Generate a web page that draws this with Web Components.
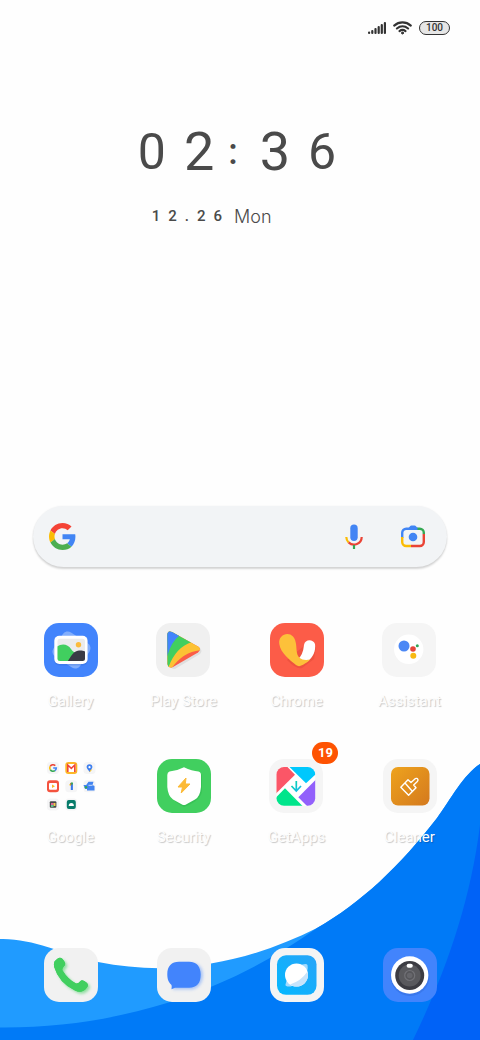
<!DOCTYPE html>
<html lang="en">
<head>
<meta charset="utf-8">
<meta name="viewport" content="width=device-width, initial-scale=1">
<title>Home screen</title>
<style>
  html, body { margin: 0; }
  body {
    font-family: Roboto, "Noto Sans", sans-serif;
    background: #fefefe;
    color: #4a4a4a;
  }
</style>
</head>
<body>

<home-screen>
  <status-bar slot="status" battery="100"></status-bar>
  <home-clock slot="clock" time="02:36" date="12.26" day="Mon"></home-clock>
  <search-pill slot="search"></search-pill>

  <app-icon icon="gallery" tile="#4284fc">Gallery</app-icon>
  <app-icon icon="play" tile="#f0f0f0">Play Store</app-icon>
  <app-icon icon="chrome" tile="#fc5c48">Chrome</app-icon>
  <app-icon icon="assistant" tile="#f5f5f5">Assistant</app-icon>
  <app-icon icon="folder" tile="transparent">Google</app-icon>
  <app-icon icon="security" tile="#41cf5f">Security</app-icon>
  <app-icon icon="getapps" tile="#f5f5f5" badge="19">GetApps</app-icon>
  <app-icon icon="cleaner" tile="#f5f5f5">Cleaner</app-icon>

  <app-icon slot="dock" icon="phone" tile="#f1f1f1" label="Phone"></app-icon>
  <app-icon slot="dock" icon="messages" tile="#f1f1f1" label="Messages"></app-icon>
  <app-icon slot="dock" icon="browser" tile="#f4f4f4" label="Browser"></app-icon>
  <app-icon slot="dock" icon="camera" tile="#4284fc" label="Camera"></app-icon>
</home-screen>

<!-- page frame: wallpaper, top area, app grid, dock -->
<template id="home-screen-tmpl">
  <style>
    :host {
      display: flex;
      flex-direction: column;
      position: relative;
      min-height: 100vh;
      overflow: hidden;
    }
    .wallpaper {
      position: absolute;
      left: 0;
      bottom: 0;
      width: 100%;
      height: 300px;
    }
    header, main, nav { position: relative; }
    main { flex: 1; display: flex; flex-direction: column; }
    .space { flex: 1; }
    .apps, nav {
      display: grid;
      grid-template-columns: repeat(4, 1fr);
      padding: 0 14px;
    }
    .apps { margin-top: 56px; row-gap: 48px; }
    nav { margin-top: 101px; padding-bottom: 38px; }
  </style>
  <svg class="wallpaper" viewBox="0 0 480 300" preserveAspectRatio="none" aria-hidden="true">
    <path fill="#209bff" d="M0 199C32 198 60 213 98 222C135 229 170 231 211 223.500C250 217 285 204 317 188C361 163 400 126 437 78C450 60 464 34 480 24V300H0Z"/>
    <path fill="#007af7" d="M0 287.500C60 288 115 279 167 263C225 244 270 221 317 188C361 163 400 126 437 78C450 60 464 34 480 24V300H0Z"/>
    <path fill="#0062f7" d="M480 85C470 165 444 236 413 300H480Z"/>
  </svg>
  <header>
    <slot name="status"></slot>
    <slot name="clock"></slot>
  </header>
  <main>
    <div class="space"></div>
    <slot name="search"></slot>
    <div class="apps"><slot></slot></div>
  </main>
  <nav aria-label="Dock"><slot name="dock"></slot></nav>
</template>

<template id="status-bar-tmpl">
  <style>
    :host {
      display: flex;
      justify-content: flex-end;
      align-items: center;
      gap: 7px;
      padding: 20px 30px 0 0;
      height: 15px;
    }
    svg { display: block; }
    .battery {
      box-sizing: border-box;
      width: 31px;
      height: 14px;
      border: 1px solid #333;
      border-radius: 7px;
      background: #e6e6e6;
      color: #333;
      font-size: 10px;
      line-height: 12px;
      font-weight: 500;
      text-align: center;
    }
  </style>
  <svg width="18" height="14" viewBox="0 0 18 14" fill="#333" aria-hidden="true">
    <rect x="0" y="10.500" width="2.200" height="2.500" rx="1"/>
    <rect x="3.200" y="9" width="2.200" height="4" rx="1"/>
    <rect x="6.400" y="7" width="2.200" height="6" rx="1"/>
    <rect x="9.600" y="5" width="2.200" height="8" rx="1"/>
    <rect x="12.700" y="3" width="2.200" height="10" rx="1"/>
    <rect x="15.800" y="1" width="2.200" height="12" rx="1"/>
  </svg>
  <svg width="19" height="14" viewBox="0 0 19 14" fill="none" stroke="#333" stroke-width="2.100" stroke-linecap="round" aria-hidden="true">
    <path d="M1.200 4.600C6 .3 13 .3 17.800 4.600M3.900 7.500C7.200 4.700 11.800 4.700 15.100 7.500M6.500 10.100C8.400 8.600 10.600 8.600 12.500 10.100"/>
    <circle cx="9.500" cy="12" r="1" fill="#333" stroke-width="1"/>
  </svg>
  <span class="battery"></span>
</template>

<template id="home-clock-tmpl">
  <style>
    :host {
      display: flex;
      justify-content: center;
      padding: 85px 6px 0 0;
    }
    .time, .group, .date, .digits { display: flex; align-items: center; }
    .time { gap: 14px; height: 64px; font-size: 50px; line-height: 64px; }
    .group { gap: 18px; }
    .big { font-size: 54px; }
    .colon { padding-right: 8px; font-size: 36px; font-weight: 500; }
    .date { gap: 12px; margin-top: 20px; padding-left: 14px; height: 24px; }
    .digits { gap: 8px; font-size: 15px; font-weight: 500; }
    .day { font-family: Inter, sans-serif; font-size: 18px; font-weight: 300; }
  </style>
  <div>
    <div class="time">
      <span class="group hours"></span><span class="colon">:</span><span class="group minutes"></span>
    </div>
    <div class="date"><span class="digits"></span><span class="day"></span></div>
  </div>
</template>

<template id="search-pill-tmpl">
  <style>
    :host { display: block; margin: 0 33px; }
    form {
      display: flex;
      align-items: center;
      gap: 16px;
      height: 61px;
      box-sizing: border-box;
      padding: 0 20px 0 16px;
      border-radius: 31px;
      background: #f2f4f6;
      box-shadow: 0 2px 2px rgba(0, 0, 0, .16), 0 0 2px rgba(0, 0, 0, .06);
    }
    svg { display: block; }
    input {
      flex: 1;
      min-width: 0;
      height: 40px;
      border: 0;
      outline: 0;
      background: none;
      font: 16px Roboto, sans-serif;
      color: #333;
    }
    .tools { display: flex; gap: 31px; }
    button { padding: 0; border: 0; background: none; cursor: pointer; }
  </style>
  <form role="search">
    <svg width="27" height="27" viewBox="0 0 48 48" aria-hidden="true">
      <path fill="#f44336" d="M24 9.500c3.540 0 6.710 1.220 9.210 3.600l6.850-6.850C35.900 2.380 30.470 0 24 0 14.620 0 6.510 5.380 2.560 13.220l7.980 6.190C12.430 13.720 17.740 9.500 24 9.500z"/>
      <path fill="#4285f4" d="M46.980 24.550c0-1.570-.15-3.090-.38-4.550H24v9.020h12.940c-.58 2.960-2.260 5.480-4.780 7.180l7.730 6c4.510-4.180 7.090-10.360 7.090-17.650z"/>
      <path fill="#fbbc05" d="M10.530 28.590c-.48-1.450-.76-2.990-.76-4.590s.27-3.140.76-4.590l-7.980-6.190C.92 16.460 0 20.120 0 24c0 3.880.92 7.540 2.560 10.780l7.970-6.190z"/>
      <path fill="#4caf50" d="M24 48c6.480 0 11.930-2.130 15.890-5.810l-7.730-6c-2.150 1.450-4.920 2.300-8.160 2.300-6.260 0-11.570-4.220-13.470-9.910l-7.980 6.190C6.510 42.620 14.620 48 24 48z"/>
    </svg>
    <input type="text" aria-label="Search">
    <div class="tools">
      <button type="button" aria-label="Voice search">
        <svg width="28" height="28" viewBox="0 0 28 28" fill="none" stroke-width="2.200">
          <rect x="10.300" y="1.500" width="7.400" height="16.500" rx="3.700" fill="#4285f4"/>
          <path stroke="#fbbc05" d="M6.300 14a7.700 7.700 0 0 0 2.300 5.400"/>
          <path stroke="#ea4335" d="M8.600 19.400A7.700 7.700 0 0 0 21.700 14"/>
          <path stroke="#34a853" d="M14 22v4"/>
        </svg>
      </button>
      <button type="button" aria-label="Search with camera">
        <svg width="28" height="28" viewBox="0 0 28 28" fill="none" stroke-width="2.400">
          <path stroke="#4285f4" d="M3.200 15V9.700a4 4 0 0 1 4-4H19"/>
          <path fill="#4285f4" d="M8.500 6.500L11 3.200Q11.500 2.500 12.500 2.500H15.500Q16.500 2.500 17 3.200L19.500 6.500Z"/>
          <path stroke="#34a853" d="M18.500 5.700H20.800a4 4 0 0 1 4 4V11"/>
          <path stroke="#ea4335" d="M24.800 11V19a4 4 0 0 1-4 4H12"/>
          <path stroke="#fbbc05" d="M12 23H7.200a4 4 0 0 1-4-4V14"/>
          <circle cx="14" cy="14" r="4.300" fill="#4285f4"/>
        </svg>
      </button>
    </div>
  </form>
</template>

<template id="app-icon-tmpl">
  <style>
    :host { display: flex; justify-content: center; }
    button {
      display: flex;
      flex-direction: column;
      align-items: center;
      gap: 14px;
      padding: 0;
      border: 0;
      background: none;
      font: inherit;
      cursor: pointer;
    }
    .tile {
      position: relative;
      width: 54px;
      height: 54px;
      border-radius: 15px;
      background: var(--tile);
    }
    svg { display: block; width: 54px; height: 54px; }
    .label {
      color: #fdfdfd;
      font-size: 15px;
      line-height: 20px;
      white-space: nowrap;
      text-shadow: 1px 1px 1px rgba(0, 0, 0, .22);
    }
    .badge {
      position: absolute;
      top: -17px;
      right: -15px;
      min-width: 26px;
      height: 22px;
      border-radius: 11px;
      background: #fe5302;
      color: #fff;
      font-size: 13px;
      line-height: 22px;
      font-weight: 700;
      text-align: center;
    }
    [hidden] { display: none; }
  </style>
  <button type="button">
    <span class="tile"><span class="art"></span><span class="badge" hidden></span></span>
    <span class="label"><slot></slot></span>
  </button>
</template>

<script>
// icon drawings, all on a 54x54 tile
const ICONS = {
  gallery: `
    <rect x="11.500" y="12.500" width="32" height="29" rx="6" transform="rotate(33 27.500 27)" fill="#82aefc"/>
    <rect x="10.300" y="13.500" width="33.500" height="29" rx="5" fill="#2a5cc0" opacity=".25"/>
    <rect x="10.300" y="12.700" width="33.300" height="28.300" rx="5" fill="#fff"/>
    <clipPath id="photo"><rect x="13.500" y="15.700" width="27.500" height="22.300" rx="2.500"/></clipPath>
    <g clip-path="url(#photo)">
      <path fill="#ececec" d="M13 15h29v24H13z"/>
      <circle cx="34.500" cy="21.700" r="2.700" fill="#fcbb3c"/>
      <path fill="#41cf5f" d="M13 23.500C18 20 24 21 27 26C29 29 31 30 33 29V39H13Z"/>
      <path fill="#3a3b45" d="M23.500 38.500C27 34 29 28 35 27.600C38 27.400 40 28 42 29V39H23Z"/>
    </g>`,
  play: `
    <clipPath id="tri"><path d="M11.300 12Q11.500 7 16 9L42 23.500Q46 26 42 29.500L17 44Q12.500 46 11.500 41Z"/></clipPath>
    <path fill="#000" opacity=".07" d="M13 41Q14 46 19 46L44 31Q47 28 44 25Z"/>
    <g clip-path="url(#tri)">
      <path fill="#fb5d47" d="M10 6h38v42H10z"/>
      <path fill="#fcc234" d="M10 6H48V27Q28 27 15 46H10Z"/>
      <path fill="#41cf5f" d="M10 6H40L36 19Q20 24 12.500 44H10Z"/>
      <path fill="#4284fc" d="M10 6H24V12Q15 19 11.300 33H10Z"/>
    </g>`,
  chrome: `
    <path fill="#c93624" opacity=".25" d="M17 37Q27 47 32 45L44 36L46 24L40 18Z"/>
    <path fill="#fff" d="M34 22C35 16 43 16 45 21C46 28 43 34 38 38C34 40 30 40 28 36Q33 32 34 22Z"/>
    <path fill="#fdc13a" d="M9.300 21C8 12 18 8 23 13.500C27 18 26 25 27 30C28 35 32 38 40 36.500C38 39 33 42 30 43Q28 43.500 26 42C20 37 10.500 30 9.300 21Z"/>`,
  assistant: `
    <circle cx="26.700" cy="26.300" r="14.700" fill="#fff"/>
    <circle cx="22" cy="23" r="5.500" fill="#4c88f5"/>
    <circle cx="31" cy="26" r="2.800" fill="#e5453a"/>
    <circle cx="35.300" cy="22.700" r="1.500" fill="#2fa758"/>
    <circle cx="31.300" cy="32.700" r="3" fill="#f8b912"/>`,
  folder: `
    <g fill="#f5f5f6">
      <rect x="3" y="3" width="12" height="12" rx="3.500"/>
      <rect x="39.500" y="3" width="12" height="12" rx="3.500"/>
      <rect x="21.300" y="21.200" width="12" height="12" rx="3.500"/>
      <rect x="39.500" y="21.200" width="12" height="12" rx="3.500"/>
      <rect x="3" y="39.500" width="12" height="12" rx="3.500"/>
      <rect x="21.300" y="39.500" width="12" height="12" rx="3.500"/>
    </g>
    <g fill="none" stroke-width="1.600">
      <path stroke="#ea4335" d="M6.200 7.400A3.300 3.300 0 0 1 11.300 6.700"/>
      <path stroke="#fbbc05" d="M6.200 7.400A3.300 3.300 0 0 0 6.300 10.800"/>
      <path stroke="#34a853" d="M6.300 10.800A3.300 3.300 0 0 0 11 11.600"/>
      <path stroke="#4285f4" d="M11 11.600A3.300 3.300 0 0 0 12.300 9H9.200"/>
    </g>
    <rect x="21.300" y="3" width="12" height="12" rx="3" fill="#fcb727"/>
    <rect x="23" y="5" width="8.600" height="8" rx="1" fill="#fff"/>
    <path fill="none" stroke="#f0473a" stroke-width="1.600" d="M23.800 13V6L27.300 9.300L30.800 6V13"/>
    <path fill="#4080ee" d="M45.500 5.200a2.900 2.900 0 0 1 2.900 2.900c0 2-2.200 3.200-2.900 5.200c-.7-2-2.900-3.200-2.900-5.200a2.900 2.900 0 0 1 2.900-2.900z"/>
    <circle cx="45.500" cy="8.200" r="1.100" fill="#fff"/>
    <path stroke="#fbbc05" stroke-width="1" d="M45.800 12.800L47.600 10.500"/>
    <rect x="3" y="21.200" width="12" height="12" rx="3" fill="#f4533f"/>
    <rect x="5" y="24" width="8" height="6.700" rx="1" fill="#fff"/>
    <path fill="#fcb727" d="M8 25.600L11 27.300L8 29z"/>
    <path fill="#fbbc05" d="M25 26L27.200 24V27z"/>
    <path fill="#3b78e7" d="M26.800 24H28.900V31H26.800z"/>
    <path fill="#ea4335" d="M26 24.500L27.500 23.500V26z"/>
    <path fill="#34a853" d="M26.800 23.500H28.900V25.500H26.800z"/>
    <path fill="#4284f0" d="M44.500 22.800H49.500L48.500 26L50.500 27V31.500H43V28L41.500 27z"/>
    <path stroke="#fff" stroke-width=".7" d="M44.500 26.300H48.500"/>
    <path fill="#4284f0" d="M39.500 26H43V30H41z"/>
    <circle cx="42" cy="28.300" r="1.200" fill="#34a853"/>
    <rect x="5.800" y="42.200" width="6.600" height="6.600" rx="1" fill="#46494a"/>
    <path fill="#e0629b" d="M7 44h2.500v2H7z"/>
    <path fill="#f7c94c" d="M9.500 44H11.500V47H9.500z"/>
    <path fill="#5fc08a" d="M7 46H9.500V48H7z"/>
    <rect x="22.800" y="41" width="9" height="9" rx="2" fill="#087c6b"/>
    <path fill="#fff" d="M24.700 47Q24.700 44 27.300 44T29.900 47z"/>`,
  security: `
    <path fill="#1c9a3c" opacity=".25" d="M12 36C17 43 24 46 27 48C35 45 44 40 45 32V15z"/>
    <path fill="#fff" d="M27 8.300Q35 12 41.500 12.500Q44 13 44 16V28Q43 38 38 40.500L29 45.500Q27 46.500 25 45.500L16 40.500Q11 37 10.300 28V16Q10.300 13 12.500 12.500Q20 12 27 8.300Z"/>
    <path fill="#fcba36" stroke="#fcba36" stroke-linejoin="round" d="M29 19L21 28H25.500L24.200 34L33 25H28.300Z"/>`,
  getapps: `
    <clipPath id="sq"><rect x="7.500" y="8" width="38.700" height="38.700" rx="7.500"/></clipPath>
    <rect x="7.500" y="8" width="38.700" height="38.700" rx="7.500" fill="#fff"/>
    <g clip-path="url(#sq)">
      <path fill="#fb5667" d="M7 7H17.500L26 15.700L7 34.500Z"/>
      <path fill="#00c8fd" d="M19.500 7H47V15L37 24.300Z"/>
      <path fill="#9260fb" d="M47 20.500V47H38L29.300 38.300Z"/>
      <path fill="#00e58b" d="M34 47.500H7V38.500L16 29.300Z"/>
    </g>
    <linearGradient id="arrow" x1="0" y1="0" x2="1" y2="1"><stop stop-color="#08d8a0"/><stop offset="1" stop-color="#16b8f4"/></linearGradient>
    <path fill="none" stroke="url(#arrow)" stroke-width="1.700" d="M27.300 22V32M22.500 27L27.300 32L32 27"/>`,
  cleaner: `
    <linearGradient id="amber" x1="0" y1="0" x2="1" y2="1"><stop stop-color="#eea31d"/><stop offset="1" stop-color="#d4791e"/></linearGradient>
    <rect x="8" y="8" width="38.500" height="38.500" rx="7" fill="url(#amber)"/>
    <g fill="none" stroke="#fff" stroke-width="1.400" stroke-linejoin="round">
      <path d="M17.800 28.300L25 20.700L28 23.500L32.200 19.700Q34.200 18.800 34.900 20.500Q35.200 21.700 34.300 22.600L30.700 26L33 28.700L25.600 36.300Z"/>
      <path d="M22 24L29.300 32.200"/>
    </g>`,
  phone: `
    <filter id="glow" x="-.3" y="-.3" width="1.700" height="1.700"><feGaussianBlur stdDeviation="1.800"/></filter>
    <path id="handset" fill="#41cf5f" d="M10.500 13.500Q15 8 18 10.500Q22 14.500 21 17Q17.500 20.500 18.500 22.500Q24 31.500 32 35.500Q34 36 36.500 33Q38.500 31 43 35Q45 37.500 42.500 40Q38 46 31 42.500Q15 35 10.200 19Q9.500 15.500 10.500 13.500Z"/>
    <use href="#handset" x="2" y="2" opacity=".55" filter="url(#glow)"/>
    <use href="#handset"/>`,
  messages: `
    <filter id="soft" x="-.3" y="-.3" width="1.700" height="1.700"><feGaussianBlur stdDeviation="1.500"/></filter>
    <path fill="#4284fc" opacity=".4" filter="url(#soft)" d="M23 15H35Q46 16 46 28Q45 40 35 41.500H16V35Q12 30 13 25Q15 15 23 15Z"/>
    <path fill="#4284fc" d="M22 13.700H32C40 13.700 43.700 19 43.700 26.500C43.700 35 40 39.700 32 39.700H18L14.500 41.200Q15 38 14.500 37C11 34 10.300 30 10.300 26C10.300 18 14.500 13.700 22 13.700Z"/>`,
  browser: `
    <linearGradient id="sky" x1="0" y1="1" x2="1" y2="0"><stop stop-color="#04b8ff"/><stop offset="1" stop-color="#28a4f8"/></linearGradient>
    <rect x="7" y="7.300" width="39.500" height="39.500" rx="9" fill="url(#sky)"/>
    <path fill="#a4dbfd" d="M28 18.500Q36 14.500 37.500 17Q38.500 22 35 28L21 38.500Q15 39 15.500 36.500Q16 33 18 30Z"/>
    <circle cx="26.500" cy="27" r="11.500" fill="#fff"/>
    <path fill="#c7e4fb" d="M37.500 23.500A11.500 11.500 0 0 1 20 36.500Q31 33 37.500 23.500Z"/>`,
  camera: `
    <circle cx="27" cy="28.500" r="19.500" fill="#285cc8" opacity=".3"/>
    <circle cx="26.700" cy="27" r="18.700" fill="#fff"/>
    <circle cx="26.700" cy="27.500" r="14.500" fill="#3c3c42"/>
    <circle cx="26.700" cy="27.500" r="11" fill="#59595d"/>
    <circle cx="26.700" cy="27.500" r="5" fill="#56565a" stroke="#717176" stroke-width="1.200"/>
    <circle cx="26.700" cy="27.500" r="2.800" fill="#66666b"/>
    <rect x="23.600" y="15.700" width="6.200" height="4" rx="2" fill="#fff"/>`
};

// attach an open shadow root filled from a template
function stamp(el, id) {
  const root = el.attachShadow({ mode: 'open' });
  root.append(document.getElementById(id).content.cloneNode(true));
  return root;
}

customElements.define('home-screen', class extends HTMLElement {
  connectedCallback() {
    stamp(this, 'home-screen-tmpl');
  }
});

customElements.define('status-bar', class extends HTMLElement {
  connectedCallback() {
    const root = stamp(this, 'status-bar-tmpl');
    root.querySelector('.battery').textContent = this.getAttribute('battery');
  }
});

customElements.define('home-clock', class extends HTMLElement {
  connectedCallback() {
    const root = stamp(this, 'home-clock-tmpl');
    const spans = (text) => [...text].map((ch) => `<span>${ch}</span>`).join('');
    const [hours, minutes] = this.getAttribute('time').split(':');

    const h = root.querySelector('.hours');
    const m = root.querySelector('.minutes');
    h.innerHTML = spans(hours);
    m.innerHTML = spans(minutes);
    // the digits next to the colon are a bit larger
    h.lastChild.className = 'big';
    m.firstChild.className = 'big';

    root.querySelector('.digits').innerHTML = spans(this.getAttribute('date'));
    root.querySelector('.day').textContent = this.getAttribute('day');
  }
});

customElements.define('search-pill', class extends HTMLElement {
  connectedCallback() {
    const root = stamp(this, 'search-pill-tmpl');
    root.querySelector('form').onsubmit = (e) => e.preventDefault();
  }
});

customElements.define('app-icon', class extends HTMLElement {
  connectedCallback() {
    const root = stamp(this, 'app-icon-tmpl');
    root.querySelector('.tile').style.setProperty('--tile', this.getAttribute('tile'));
    root.querySelector('.art').innerHTML =
      `<svg viewBox="0 0 54 54" aria-hidden="true">${ICONS[this.getAttribute('icon')]}</svg>`;

    if (this.hasAttribute('badge')) {
      const badge = root.querySelector('.badge');
      badge.textContent = this.getAttribute('badge');
      badge.hidden = false;
    }

    // dock icons have no visible caption
    if (this.hasAttribute('label')) {
      root.querySelector('button').setAttribute('aria-label', this.getAttribute('label'));
      root.querySelector('.label').hidden = true;
    }
  }
});
</script>
</body>
</html>
